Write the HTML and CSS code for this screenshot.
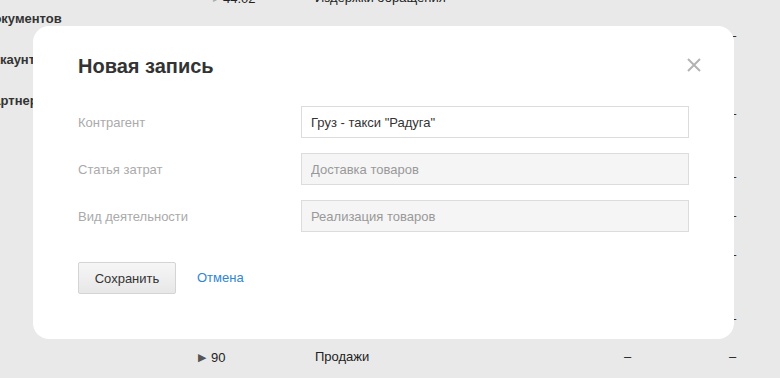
FILE: index.html
```html
<!DOCTYPE html>
<html lang="ru">
<head>
  <meta charset="UTF-8" />
  <meta name="viewport" content="width=device-width, initial-scale=1.0" />
  <title>Новая запись</title>
  <link rel="stylesheet" href="styles.css">
</head>
<body>
  <div class="page">
    <div class="sidebar">
      <div class="side-item">Документов</div>
      <div class="side-item">Аккаунта</div>
      <div class="side-item">Партнеры</div>
    </div>

    <div class="table">
      <div class="row h38">
        <div class="cell code child"><span class="arrow light">&#9656;</span>44.02</div>
        <div class="cell name">Издержки обращения</div>
        <div class="cell sum">&ndash;</div>
        <div class="cell sum">&ndash;</div>
      </div>
      <div class="row h78">
        <div class="cell code"></div><div class="cell name"></div>
        <div class="cell sum"></div><div class="cell sum">&ndash;</div>
      </div>
      <div class="row h63">
        <div class="cell code"></div><div class="cell name"></div>
        <div class="cell sum"></div><div class="cell sum">&ndash;</div>
      </div>
      <div class="row h39">
        <div class="cell code"></div><div class="cell name"></div>
        <div class="cell sum"></div><div class="cell sum">&ndash;</div>
      </div>
      <div class="row h39">
        <div class="cell code"></div><div class="cell name"></div>
        <div class="cell sum"></div><div class="cell sum">&ndash;</div>
      </div>
      <div class="row h64">
        <div class="cell code"></div><div class="cell name"></div>
        <div class="cell sum"></div><div class="cell sum">&ndash;</div>
      </div>
      <div class="row h38">
        <div class="cell code"></div><div class="cell name"></div>
        <div class="cell sum"></div><div class="cell sum">&ndash;</div>
      </div>
      <div class="row h38">
        <div class="cell code"><span class="arrow">&#9654;</span>90</div>
        <div class="cell name">Продажи</div>
        <div class="cell sum">&ndash;</div>
        <div class="cell sum">&ndash;</div>
      </div>
    </div>
  </div>

  <!-- modal over the table -->
  <div class="modal">
    <div class="modal-head">
      <h2 class="modal-title">Новая запись</h2>
      <span class="close">
        <svg width="14" height="14" viewBox="0 0 14 14">
          <path d="M1 1 L13 13 M13 1 L1 13" stroke="#b3b3b3" stroke-width="2" fill="none"/>
        </svg>
      </span>
    </div>

    <div class="form">
      <div class="form-row">
        <label class="form-label">Контрагент</label>
        <input class="field" type="text" value='Груз - такси "Радуга"'>
      </div>
      <div class="form-row">
        <label class="form-label">Статья затрат</label>
        <input class="field locked" type="text" value="Доставка товаров" readonly>
      </div>
      <div class="form-row">
        <label class="form-label">Вид деятельности</label>
        <input class="field locked" type="text" value="Реализация товаров" readonly>
      </div>
    </div>

    <div class="actions">
      <button class="btn">Сохранить</button>
      <a class="cancel" href="#">Отмена</a>
    </div>
  </div>
</body>
</html>
```

FILE: styles.css
```css
body {
  margin: 0;
  background: #e9e9e9;
  font-family: 'Liberation Sans', Arial, sans-serif;
  font-size: 13px;
  color: #222;
  height: 378px;
  overflow: hidden;
}

.page {
  display: flex;
}

.sidebar {
  width: 214px;
  margin-left: -16px;
  padding-top: 9px;
  flex-shrink: 0;
}

.side-item {
  font-weight: bold;
  color: #333;
  line-height: 20px;
  height: 41px;
  white-space: nowrap;
}

.table {
  margin-top: -12px;
}

.row {
  display: flex;
  line-height: 20px;
  box-sizing: border-box;
}

.h38 { height: 38px; }
.h39 { height: 39px; }
.h63 { height: 63px; }
.h64 { height: 64px; }
.h78 { height: 78px; }

.cell {
  white-space: nowrap;
}

.code {
  width: 117px;
}

.code.child {
  padding-left: 15px;
  box-sizing: border-box;
}

.arrow {
  color: #555;
  font-size: 11px;
  margin-right: 5px;
  vertical-align: 1px;
}

.arrow.light {
  color: #aaa;
  font-size: 11px;
  margin-right: 4px;
}

.name {
  width: 309px;
}

.sum {
  width: 105px;
  text-align: left;
}

/* modal */
.modal {
  position: absolute;
  left: 33px;
  top: 26px;
  width: 701px;
  height: 313px;
  box-sizing: border-box;
  background: #fff;
  border-radius: 16px;
  padding: 29px 45px 45px;
}

.modal-head {
  display: flex;
  justify-content: space-between;
  align-items: center;
}

.modal-title {
  margin: 0;
  font-size: 20px;
  font-weight: bold;
  color: #333;
  line-height: 23px;
}

.close {
  display: flex;
  margin-right: -12px;
  margin-top: -3px;
}

.form {
  margin-top: 28px;
  display: flex;
  flex-direction: column;
  gap: 15px;
}

.form-row {
  display: flex;
  align-items: center;
}

.form-label {
  width: 223px;
  color: #aaa;
  flex-shrink: 0;
}

.field {
  width: 388px;
  height: 32px;
  box-sizing: border-box;
  border: 1px solid #dcdcdc;
  padding: 0 9px;
  font-family: 'Liberation Sans', Arial, sans-serif;
  font-size: 13px;
  color: #333;
  background: #fff;
  outline: none;
}

.field.locked {
  background: #f5f5f5;
  color: #999;
}

.actions {
  margin-top: 30px;
  display: flex;
  align-items: center;
  gap: 21px;
}

.btn {
  width: 98px;
  height: 32px;
  border: 1px solid #d4d4d4;
  border-radius: 2px;
  background: linear-gradient(#f6f6f6, #e7e7e7);
  font-family: 'Liberation Sans', Arial, sans-serif;
  font-size: 13px;
  color: #333;
  cursor: pointer;
}

.cancel {
  color: #2f86d4;
  text-decoration: none;
  margin-top: -2px;
}
```
